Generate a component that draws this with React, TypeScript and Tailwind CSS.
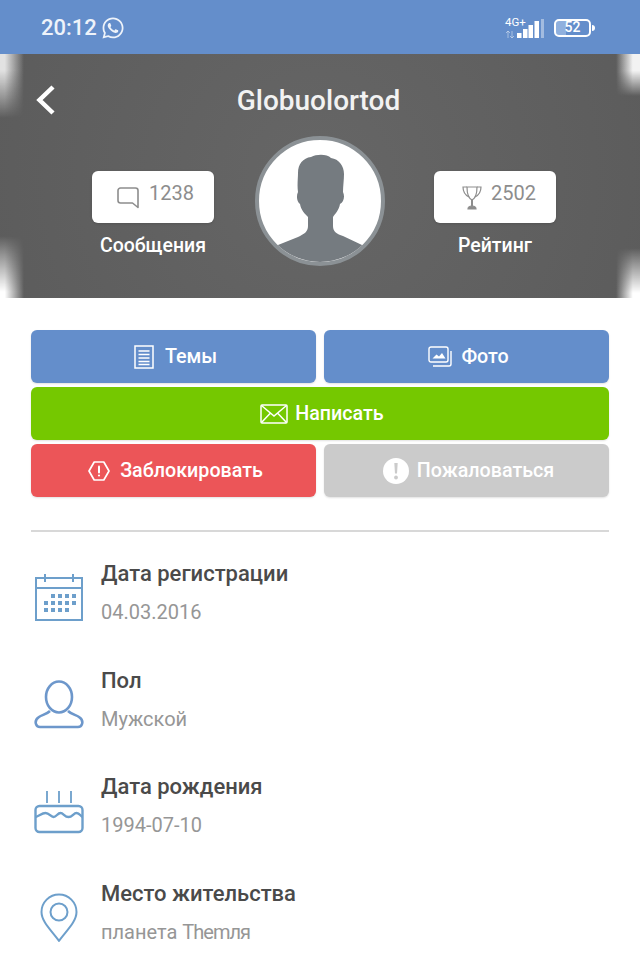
import React from 'react';
import { FaWhatsapp } from 'react-icons/fa';

// Small drawings that no icon package has in this exact shape
const ChatIcon = () => (
  <svg width="24" height="24" viewBox="0 0 24 24" fill="none" stroke="#8d8d8d" strokeWidth="1.6">
    <path d="M4.5 3h15a2.5 2.5 0 0 1 2.5 2.5v17l-5.5-4.5H4.5A2.5 2.5 0 0 1 2 15.500v-10A2.500 2.500 0 0 1 4.500 3z" strokeLinejoin="round" />
  </svg>
);

const TrophyIcon = () => (
  <svg width="20" height="26" viewBox="0 0 20 26" fill="none" stroke="#8d8d8d" strokeWidth="1.2">
    <path d="M5 2h10c0 7-1 11-5 13C6 13 5 9 5 2z" />
    <path d="M5 2H1c0 5 2 8 6 10M15 2h4c0 5-2 8-6 10" />
    <path d="M10 15v6" strokeWidth="2" />
    <path d="M6 24c0-2 2-3 4-3s4 1 4 3z" fill="#8d8d8d" />
  </svg>
);

const DocIcon = () => (
  <svg width="20" height="24" viewBox="0 0 20 24" fill="none" stroke="#fff" strokeWidth="1.5">
    <rect x="1" y="1" width="18" height="22" />
    <path d="M4.500 6h11M4.500 9.500h11M4.500 13h11M4.500 16.500h11M4.500 19.500h11" />
  </svg>
);

const PhotoIcon = () => (
  <svg width="24" height="21" viewBox="0 0 24 21" fill="none" stroke="#fff" strokeWidth="1.4">
    <rect x="1" y="1" width="19" height="15" rx="2" />
    <path d="M23 5v13a2 2 0 0 1-2 2H5" />
    <path d="M4.500 12.500l4-4 2.500 2 3-3.500 3.500 5.500z" fill="#fff" stroke="none" />
  </svg>
);

const MailIcon = () => (
  <svg width="28" height="20" viewBox="0 0 28 20" fill="none" stroke="#fff" strokeWidth="1.500">
    <rect x="1" y="1" width="26" height="18" rx="1" />
    <path d="M1.500 1.500L14 12 26.500 1.500M1.500 18.500L10.500 9M26.500 18.500L17.500 9" />
  </svg>
);

const BlockIcon = () => (
  <svg width="22" height="20" viewBox="0 0 22 20" fill="none" stroke="#fff" strokeWidth="1.700">
    <path d="M6.200 1h9.600L21 10l-5.200 9H6.200L1 10z" strokeLinejoin="round" />
    <path d="M11 5.500v6" strokeLinecap="round" strokeWidth="2" />
    <circle cx="11" cy="14.500" r="1.100" fill="#fff" stroke="none" />
  </svg>
);

const AlertIcon = () => (
  <svg width="26" height="26" viewBox="0 0 26 26">
    <circle cx="13" cy="13" r="13" fill="#fff" />
    <path d="M11.300 5h3.400l-.7 10.500h-2z" fill="#cbcbcb" />
    <circle cx="13" cy="19.500" r="1.900" fill="#cbcbcb" />
  </svg>
);

const CalendarIcon = () => (
  <svg width="48" height="48" viewBox="0 0 48 48" fill="none" stroke="#6d9fcb" strokeWidth="2">
    <rect x="1" y="5" width="46" height="42" />
    <path d="M1 15h46M10 1v8M38 1v8" />
    <g fill="#6d9fcb" stroke="none">
      <rect x="16" y="21" width="4" height="4" /><rect x="23" y="21" width="4" height="4" /><rect x="30" y="21" width="4" height="4" /><rect x="37" y="21" width="4" height="4" />
      <rect x="9" y="28" width="4" height="4" /><rect x="16" y="28" width="4" height="4" /><rect x="23" y="28" width="4" height="4" /><rect x="30" y="28" width="4" height="4" /><rect x="37" y="28" width="4" height="4" />
      <rect x="9" y="35" width="4" height="4" /><rect x="16" y="35" width="4" height="4" /><rect x="23" y="35" width="4" height="4" /><rect x="30" y="35" width="4" height="4" />
    </g>
  </svg>
);

const UserIcon = () => (
  <svg width="50" height="50" viewBox="0 0 50 50" fill="none" stroke="#6d97cb" strokeWidth="2.600">
    <ellipse cx="25" cy="17" rx="13" ry="15.500" />
    <path d="M16 31c-3 3-8 4-11 6-3 2-4 4-3 7 .5 2 2 3 4 3h38c2 0 3.500-1 4-3 1-3 0-5-3-7-3-2-8-3-11-6" strokeLinejoin="round" />
  </svg>
);

const CakeIcon = () => (
  <svg width="50" height="50" viewBox="0 0 50 50" fill="none" stroke="#6d9fcb" strokeWidth="2.400">
    <rect x="1.500" y="20" width="47" height="26" rx="4" />
    <path d="M1.500 31c4-1 6-4 10-4s5 4 8 4 4-4 7-4 4 4 8 4 5-4 8-4 4 3 6 4" />
    <path d="M13 5v12M25 5v12M37 5v12" strokeWidth="1.800" />
  </svg>
);

const PinIcon = () => (
  <svg width="38" height="50" viewBox="0 0 38 50" fill="none" stroke="#6d9fcb" strokeWidth="2">
    <path d="M19 48C12 38 1.500 29 1.500 19a17.500 17.500 0 0 1 35 0c0 10-10.500 19-17.500 29z" strokeLinejoin="round" />
    <circle cx="19" cy="19" r="8.500" />
  </svg>
);

const Silhouette = () => (
  <svg viewBox="0 0 130 130" className="absolute -top-[4px] -left-[4px] h-[130px] w-[130px]">
    <path
      d="M23 109L43 101C49 98 53 96 53 90L53 81C50 78 46 74 45 68C42 66 41 60 43 56C42 50 43 42 43 37C43 28 48 22 56 21C62 18 72 18 76 22C84 23 89 30 89 38C89 44 88 50 88 56C90 60 89 66 85 68C84 74 80 78 78 81L78 90C78 96 82 98 88 100L107 109L130 130L0 130z"
      fill="#757b80"
    />
  </svg>
);

const SignalIcon = () => (
  <svg width="40" height="19" viewBox="0 0 40 19" fill="#fff">
    <path d="M3 12v7M1 14l2-2 2 2M7 19v-7M5 17l2 2 2-2" fill="none" stroke="#fff" strokeWidth="0.9" opacity="0.5" />
    <rect x="12" y="14" width="4.500" height="5" />
    <rect x="18" y="10" width="4.500" height="9" />
    <rect x="23.500" y="6" width="4.500" height="13" />
    <rect x="29.500" y="2" width="4.500" height="17" />
    <rect x="36" y="0" width="3" height="19" opacity="0.4" />
  </svg>
);

const StatCard = ({ icon, value, label }: { icon: React.ReactNode; value: string; label: string }) => (
  <div className="flex w-[122px] flex-col items-center">
    <div className="flex h-[52px] w-full items-start justify-end gap-[9px] rounded-md bg-white pt-[9px] pr-[20px] shadow-sm">
      <div className="mt-[5px]">{icon}</div>
      <span className="text-[20px] leading-[26px] text-[#8d8d8d]">{value}</span>
    </div>
    <span className="mt-[11px] text-[19.5px] leading-[24px] font-medium text-white">{label}</span>
  </div>
);

const ActionButton = ({ icon, text, color, gap, textColor }: { icon: React.ReactNode; text: string; color: string; gap: string; textColor?: string }) => (
  <button className={`flex h-[53px] w-full items-center justify-center rounded-md pl-[4px] text-[19.7px] font-medium shadow-[0_1px_2px_rgba(0,0,0,0.12)] ${color} ${gap} ${textColor ?? 'text-white'}`}>
    {icon}
    <span>{text}</span>
  </button>
);

const rows: { icon: React.ReactNode; title: string; value: React.ReactNode }[] = [
  { icon: <CalendarIcon />, title: 'Дата регистрации', value: '04.03.2016' },
  { icon: <UserIcon />, title: 'Пол', value: 'Мужской' },
  { icon: <CakeIcon />, title: 'Дата рождения', value: '1994-07-10' },
  { icon: <PinIcon />, title: 'Место жительства', value: <>планета <span className="tracking-[-1px]">Themля</span></> },
];

export default function App() {
  return (
    <div className="h-[975px] w-[640px] overflow-hidden bg-white font-['Roboto',sans-serif]">
      {/* Status bar */}
      <div className="flex h-[54px] items-center justify-between bg-[#648ecb] pt-[1px] pr-[45px] pl-[41px]">
        <div className="flex items-center gap-[4px] text-[#eef3fa]">
          <span className="text-[22px] font-medium">20:12</span>
          <FaWhatsapp size={24} />
        </div>
        <div className="flex items-center gap-[9px] text-white">
          <div className="relative mt-[1px]">
            <span className="absolute -top-[2px] left-0 text-[11.5px] leading-[10px]">4G+</span>
            <SignalIcon />
          </div>
          <div className="flex h-[18px] w-[37px] items-center justify-center rounded-[5px] border-2 border-white bg-gradient-to-r from-[#8fb0de] from-30% to-transparent to-30% text-[14px] font-medium">52</div>
          <div className="-ml-[8px] h-[6px] w-[3px] rounded-r-sm bg-white" />
        </div>
      </div>

      {/* Profile header */}
      <div className="relative h-[244px] overflow-hidden bg-[#5f5f5f] bg-[radial-gradient(circle_at_50%_50%,#666666,#5c5c5c)]">
        {/* Faded corners of the background picture */}
        <div className="absolute top-0 left-0 h-[64px] w-[24px] bg-gradient-to-r from-[#e2e2e2] from-20% to-transparent [mask-image:linear-gradient(to_bottom,black_25%,transparent)]" />
        <div className="absolute bottom-0 left-0 h-[62px] w-[24px] bg-gradient-to-r from-white from-20% to-transparent [mask-image:linear-gradient(to_top,black_10%,transparent)]" />
        <div className="absolute top-0 right-0 h-[42px] w-[24px] bg-gradient-to-l from-[#f2f2f2] from-30% to-transparent [mask-image:linear-gradient(to_bottom,black_40%,transparent)]" />
        <div className="absolute right-0 bottom-0 h-[50px] w-[24px] bg-gradient-to-l from-white from-30% to-transparent [mask-image:linear-gradient(to_top,black_10%,transparent)]" />

        <div className="relative flex h-[92px] items-center justify-center pt-[2px] pr-[3px]">
          <svg className="absolute top-[31px] left-[36px]" width="20" height="30" viewBox="0 0 20 30" fill="none" stroke="#fff" strokeWidth="4.500">
            <path d="M17 2L3.500 15 17 28" />
          </svg>
          <span className="text-[28px] font-medium text-[#f2f2f2]">Globuolortod</span>
        </div>

        <div className="relative -mt-[10px] flex items-start pl-[92px]">
          <div className="pt-[35px]">
            <StatCard icon={<ChatIcon />} value="1238" label="Сообщения" />
          </div>
          <div className="relative ml-[41px] h-[130px] w-[130px] overflow-hidden rounded-full border-[4px] border-[#8b9195] bg-white">
            <Silhouette />
          </div>
          <div className="ml-[49px] pt-[35px]">
            <StatCard icon={<TrophyIcon />} value="2502" label="Рейтинг" />
          </div>
        </div>
      </div>

      {/* Actions */}
      <div className="flex flex-col gap-[4px] px-[31px] pt-[32px]">
        <div className="grid grid-cols-2 gap-[8px]">
          <ActionButton icon={<DocIcon />} text="Темы" color="bg-[#648ecb]" gap="gap-[11px]" />
          <ActionButton icon={<PhotoIcon />} text="Фото" color="bg-[#648ecb]" gap="gap-[9px]" />
        </div>
        <ActionButton icon={<MailIcon />} text="Написать" color="bg-[#75c800]" gap="gap-[7px]" />
        <div className="grid grid-cols-2 gap-[8px]">
          <ActionButton icon={<BlockIcon />} text="Заблокировать" color="bg-[#ec5558]" gap="gap-[10px]" />
          <ActionButton icon={<AlertIcon />} text="Пожаловаться" color="bg-[#cbcbcb]" gap="gap-[8px]" />
        </div>
      </div>

      <div className="mx-[31px] mt-[33px] h-[2px] bg-[#d8d8d8]" />

      {/* Info rows */}
      <div className="flex flex-col px-[31px] pt-[20px]">
        {rows.map((row) => (
          <div key={row.title} className="flex h-[106.67px] items-start">
            <div className="mt-[21px] flex w-[56px] justify-center">{row.icon}</div>
            <div className="ml-[14px] flex flex-col pt-[9px]">
              <span className="text-[22px] leading-[26px] font-medium text-[#4a4a4a]">{row.title}</span>
              <span className="mt-[13px] text-[20px] leading-[24px] text-[#969696]">{row.value}</span>
            </div>
          </div>
        ))}
      </div>
    </div>
  );
}
